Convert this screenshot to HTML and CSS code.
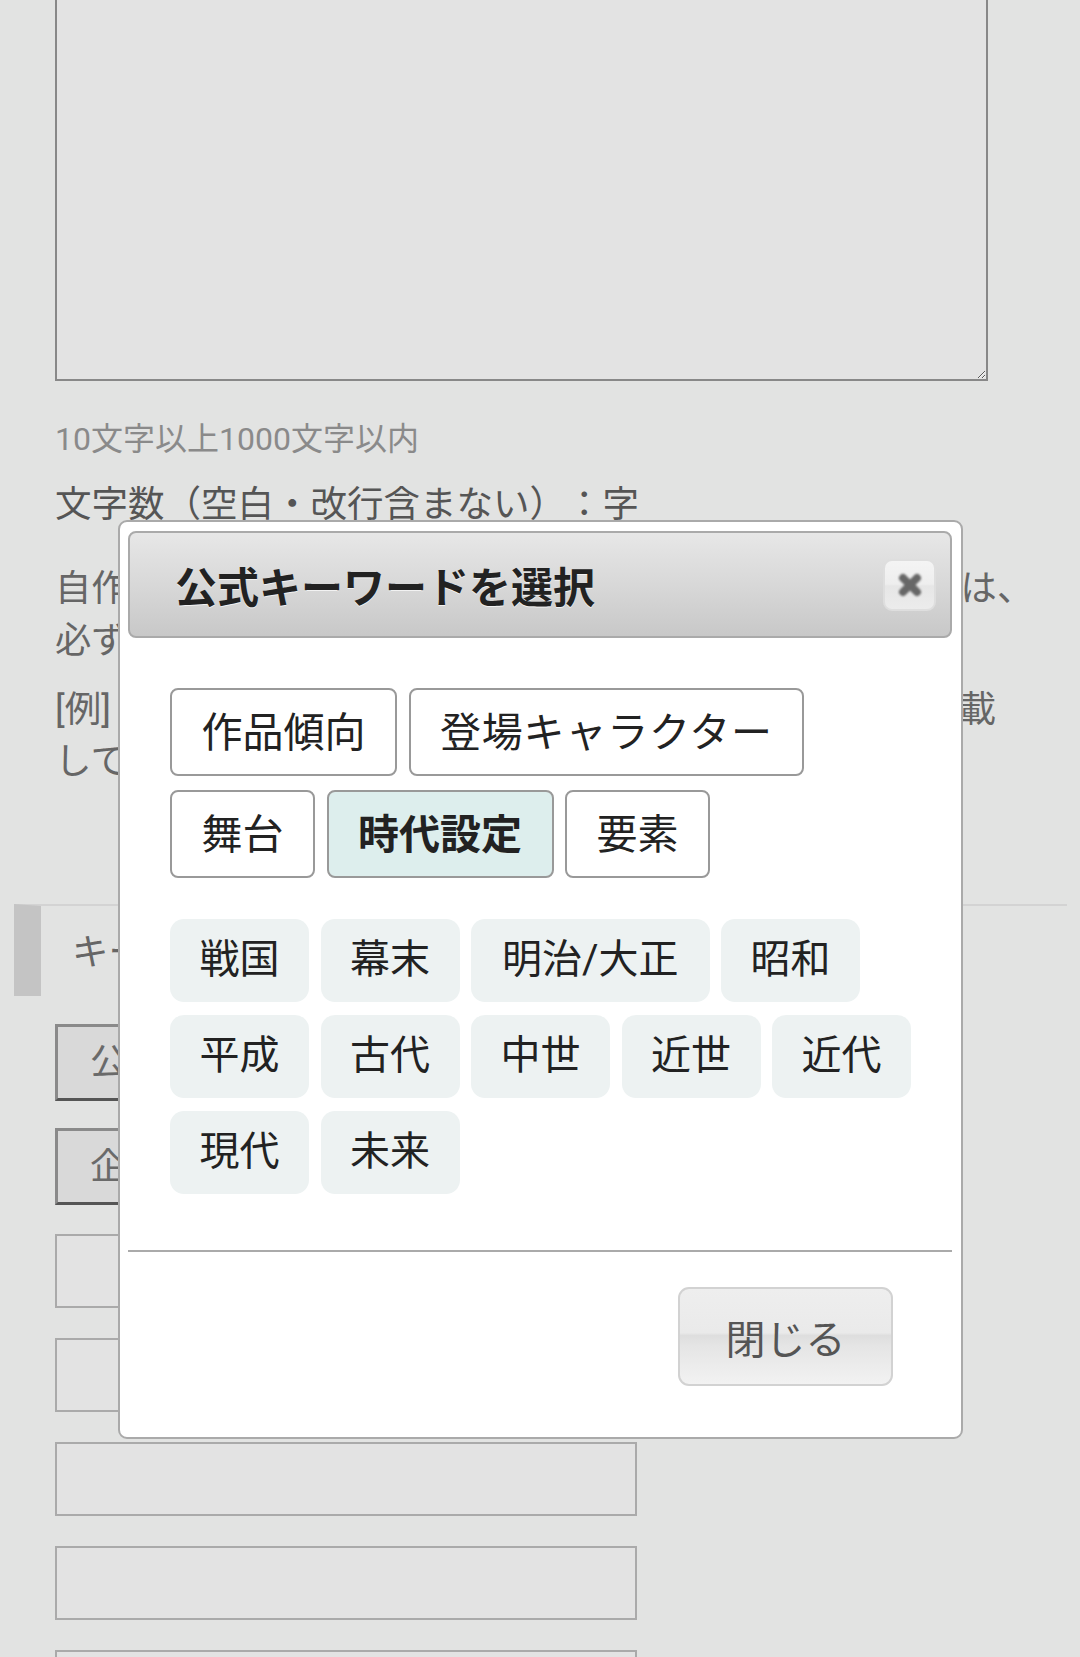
FILE: index.html
```html
<!DOCTYPE html>
<html lang="ja">
<head>
<meta charset="utf-8">
<title>公式キーワードを選択</title>
<link rel="stylesheet" href="styles.css">
</head>
<body>
<div class="page">
  <div class="field">
    <textarea class="story"></textarea>
    <p class="note">10文字以上1000文字以内</p>
    <p class="count">文字数（空白・改行含まない）：字</p>
    <p class="desc lead">自作品以外の登場人物や設定を使用された作品については、<br>必ず原作名をキーワードに入れてください。</p>
    <p class="desc ex">[例] 二次創作は原作のタイトル名をキーワードの欄に記載<br>してください。</p>
  </div>
  <h2 class="sec">キーワード</h2>
  <div class="field">
    <button class="kw-btn first">公式キーワードを選択</button>
    <button class="kw-btn">企画キーワードを選択</button>
    <input class="kw-input first" type="text">
    <input class="kw-input" type="text">
    <input class="kw-input" type="text">
    <input class="kw-input" type="text">
    <input class="kw-input" type="text">
  </div>
</div>

<div class="modal">
  <div class="mh">
    <h1 class="mh-title">公式キーワードを選択</h1>
    <button class="mh-close" aria-label="close">
      <svg width="26" height="26" viewBox="0 0 26 26"><path d="M6 6 L20 20 M20 6 L6 20" stroke="#676767" stroke-width="8" stroke-linecap="round"/></svg>
    </button>
  </div>
  <div class="mb">
    <div class="tabs">
      <button class="tab">作品傾向</button>
      <button class="tab wide">登場キャラクター</button>
      <button class="tab">舞台</button>
      <button class="tab active">時代設定</button>
      <button class="tab">要素</button>
    </div>
    <div class="chips">
      <span class="chip">戦国</span>
      <span class="chip">幕末</span>
      <span class="chip slash">明治/大正</span>
      <span class="chip">昭和</span>
      <span class="chip">平成</span>
      <span class="chip">古代</span>
      <span class="chip">中世</span>
      <span class="chip">近世</span>
      <span class="chip">近代</span>
      <span class="chip">現代</span>
      <span class="chip">未来</span>
    </div>
  </div>
  <div class="mf">
    <button class="close-btn">閉じる</button>
  </div>
</div>
</body>
</html>
```

FILE: styles.css
```css
html, body {
  margin: 0;
  padding: 0;
}
body {
  background: #e2e3e2;
  font-family: Roboto, "Noto Sans CJK JP", sans-serif;
  color: #555;
  overflow: hidden;
  text-spacing-trim: space-all;
}
.page {
  padding: 0 13px 0 14px;
}
.field {
  padding-left: 41px;
}
.story {
  display: block;
  box-sizing: border-box;
  width: 933px;
  height: 381px;
  margin: 0;
  border: 2px solid #888;
  border-top: 0;
  background: #e3e3e3;
  resize: vertical;
}
p {
  margin: 0;
}
.note {
  margin-top: 36px;
  font-size: 32px;
  line-height: 44px;
  color: #8a8a8a;
}
.count {
  margin-top: 18px;
  font-size: 36.5px;
  line-height: 52px;
  color: #555;
}
.desc {
  margin-top: 32px;
  font-size: 36.5px;
  line-height: 52px;
  color: #666;
  white-space: nowrap;
}
.desc.lead {
  font-size: 36.3px;
}
.desc.ex {
  margin-top: 17px;
}
.sec {
  box-sizing: border-box;
  margin: 116px 0 0;
  height: 92px;
  border-left: 27px solid #c4c4c4;
  border-top: 2px solid #d3d3d3;
  padding: 0 0 4px 31px;
  display: flex;
  align-items: center;
  font-size: 36.5px;
  font-weight: normal;
  color: #666;
}
.kw-btn {
  display: block;
  box-sizing: border-box;
  width: 520px;
  height: 77px;
  margin-top: 27px;
  padding: 0 0 6px 32px;
  text-align: left;
  background: #d9d9d9;
  border: 3px solid;
  border-color: #8a8a8a #555 #555 #8a8a8a;
  font-family: inherit;
  font-size: 36.5px;
  color: #6a6a6a;
}
.kw-btn.first {
  margin-top: 28px;
}
.kw-input {
  display: block;
  box-sizing: border-box;
  width: 582px;
  height: 74px;
  margin-top: 30px;
  border: 2px solid #aaa;
  background: #e3e3e3;
}
.kw-input.first {
  margin-top: 29px;
}

/* modal */
.modal {
  position: absolute;
  left: 118px;
  top: 520px;
  width: 845px;
  box-sizing: border-box;
  background: #fff;
  border: 2px solid #aaa;
  border-radius: 9px;
  padding: 9px 9px 0 8px;
}
.mh {
  box-sizing: border-box;
  height: 107px;
  border: 2px solid #aaa;
  border-radius: 8px;
  background: linear-gradient(to bottom, #e7e7e7 0%, #d8d8d8 50%, #c8c8c8 100%);
  display: flex;
  align-items: center;
  justify-content: space-between;
  padding: 0 14px 0 45px;
}
.mh-title {
  margin: 0;
  font-size: 42px;
  font-weight: bold;
  color: #222;
  text-shadow: 0 1px 0 #f2f2f2;
}
.mh-close {
  box-sizing: border-box;
  width: 53px;
  height: 52px;
  padding: 0;
  border: 2px solid #dedede;
  border-radius: 9px;
  background: linear-gradient(to bottom, #f4f4f4 0%, #eeeeee 48%, #e6e6e6 52%, #ececec 100%);
  display: flex;
  align-items: center;
  justify-content: center;
}
.mh-close svg {
  filter: blur(0.8px);
}
.mb {
  padding: 50px 12px 56px 42px;
}
.tabs {
  display: flex;
  flex-wrap: wrap;
  gap: 14px 11.5px;
}
.tab {
  box-sizing: border-box;
  height: 88px;
  padding: 0 29.5px 6px;
  border: 2px solid #999;
  border-radius: 8px;
  background: #fff;
  font-family: inherit;
  font-size: 41px;
  color: #222;
}
.tab.wide {
  letter-spacing: 0.8px;
}
.tab.active {
  background: #ddeeed;
  font-weight: bold;
}
.chips {
  margin-top: 41px;
  display: flex;
  flex-wrap: wrap;
  gap: 13px 11.5px;
}
.chip {
  box-sizing: border-box;
  height: 83px;
  padding: 0 29.5px 9px;
  display: flex;
  align-items: center;
  background: #edf2f2;
  border-radius: 14px;
  font-size: 40px;
  color: #222;
}
.chip.slash {
  padding: 0 31px 9px;
}
.mf {
  border-top: 2px solid #aaa;
  padding: 35px 59px 51px 0;
  display: flex;
  justify-content: flex-end;
}
.close-btn {
  box-sizing: border-box;
  width: 215px;
  height: 99px;
  border: 2px solid #d2d2d2;
  border-radius: 11px;
  background: linear-gradient(to bottom, #eeeeee 0%, #eaeaea 46%, #dedede 49%, #e5e5e5 60%, #f2f2f2 100%);
  font-family: inherit;
  font-size: 40px;
  color: #555;
}
```
